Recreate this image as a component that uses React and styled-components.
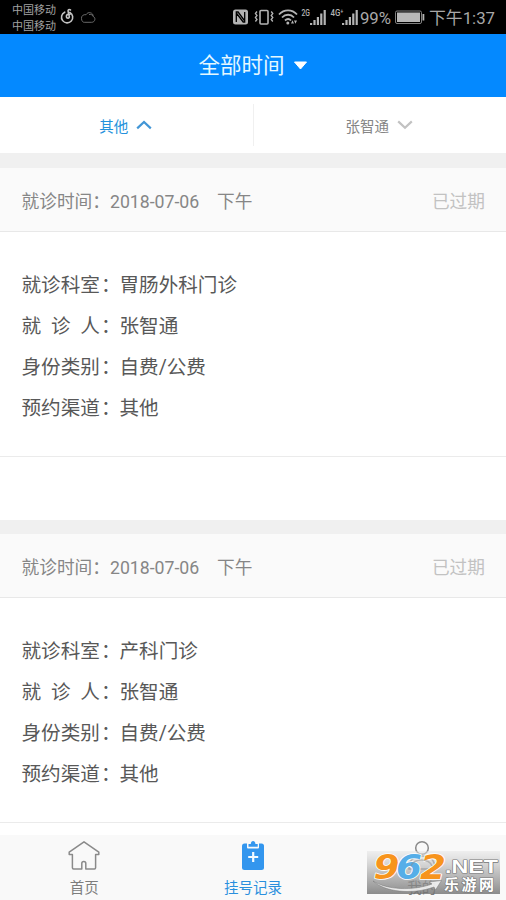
import React from 'react';
import styled, { createGlobalStyle } from 'styled-components';

const GlobalStyle = createGlobalStyle`
  * {
    box-sizing: border-box;
  }

  body {
    margin: 0;
    background: #fff;
    font-family: Roboto, 'Noto Sans CJK SC', sans-serif;
  }
`;

const Screen = styled.div`
  display: flex;
  flex-direction: column;
  width: 506px;
  height: 900px;
  overflow: hidden;
  background: #fff;
`;

const StatusBar = styled.div`
  display: flex;
  flex: none;
  align-items: center;
  height: 34px;
  padding: 0 11px 0 12px;
  background: #000;
  color: #b4b4b4;
`;

const Carriers = styled.div`
  width: 48px;
  padding-top: 3px;
  color: #a2a2a2;
  font-size: 11px;
  line-height: 15.5px;
  white-space: nowrap;
`;

const StatusIcons = styled.svg`
  display: block;
  flex: none;
`;

const Spacer = styled.div`
  flex: 1;
`;

const StatusText = styled.span`
  padding-top: 1px;
  color: #a8a8a8;
  font-size: ${({ $size }) => $size}px;
  line-height: 34px;
  white-space: nowrap;
`;

const Header = styled.div`
  display: flex;
  flex: none;
  justify-content: center;
  align-items: center;
  gap: 8px;
  height: 63px;
  background: #0489ff;
  color: #e4f8ff;
  font-size: 21.5px;
  line-height: 30px;
`;

const Filters = styled.div`
  display: flex;
  flex: none;
  align-items: center;
  height: 56px;
`;

const Filter = styled.div`
  display: flex;
  flex: 1;
  justify-content: center;
  align-items: center;
  gap: 8px;
  height: 42px;
  padding-right: 1px;
  color: ${({ $active }) => ($active ? '#2592dc' : '#858585')};
  font-size: 14.5px;

  & + & {
    border-left: 1px solid #f0f0f0;
  }
`;

const List = styled.div`
  flex: 1;
  overflow: hidden;
`;

const Card = styled.div`
  height: ${({ $first }) => ($first ? 367 : 366)}px;
  border-top: ${({ $first }) => ($first ? 15 : 14)}px solid #f0f0f0;
`;

const CardHeader = styled.div`
  display: flex;
  justify-content: space-between;
  align-items: center;
  height: 64px;
  padding: 0 21px 0 21.5px;
  border-bottom: 1px solid #e8e8e8;
  background: #fafafa;
  color: #868686;
  font-size: 17.7px;
  white-space: pre;
`;

const Expired = styled.span`
  color: #c2c2c2;
`;

const CardBody = styled.div`
  height: 225px;
  padding: 33px 21.5px 0;
  border-bottom: 1px solid #ebebeb;
`;

const Row = styled.div`
  display: flex;
  height: 40.85px;
  color: #585858;
  font-size: 19.6px;
  line-height: 41px;
`;

const Label = styled.div`
  display: flex;
  justify-content: space-between;
  width: 78.4px;
`;

const Colon = styled.span`
  width: 19.6px;
  padding-left: 1px;
`;

const TabBar = styled.div`
  position: relative;
  display: flex;
  flex: none;
  height: 65px;
  background: #f9f9f9;
`;

const Tab = styled.div`
  display: flex;
  flex: 1;
  flex-direction: column;
  align-items: center;
  padding-top: 4px;
  color: ${({ $active }) => ($active ? '#2a8fdd' : '#7d7d7d')};
  font-size: 14.5px;
  line-height: 22px;

  svg {
    display: block;
    margin-bottom: 5px;
  }
`;

const Watermark = styled.svg`
  position: absolute;
  right: 6px;
  bottom: 5px;
  overflow: visible;
`;

const records = [
  { date: '2018-07-06', period: '下午', department: '胃肠外科门诊' },
  { date: '2018-07-06', period: '下午', department: '产科门诊' },
];

function MusicCloudIcons() {
  return (
    <StatusIcons width="38" height="20" viewBox="0 0 38 20" fill="none">
      <path
        d="M4.700 5.200a5.600 5.600 0 1 0 5.200.2M10.500 3c-1.400-1-2.800-.3-2.400 1.300l1.200 5.400c.3 1.700-2.600 2-2.900.1-.3-2 1.700-3.200 3.600-2.600"
        stroke="#c4c4c4"
        strokeWidth="1.6"
        strokeLinecap="round"
      />
      <path
        d="M24.200 15.300h7.500c3.400 0 4.500-4.700 1.400-5.900.5-3.900-5.400-5.300-7-1.700-2.800-.5-5 1.300-4.600 4 .2 2.200 1.100 3.600 2.700 3.600zM29 7.700c1.300-.9 3-.4 4 1.600"
        stroke="#686868"
        strokeWidth="1"
      />
    </StatusIcons>
  );
}

function Bars({ x }) {
  return (
    <g fill="#b4b4b4">
      {[2, 5, 8, 11.5, 15].map((height, i) => (
        <rect key={height} x={x + i * 3.4} y={25 - height} width="2.2" height={height} />
      ))}
    </g>
  );
}

function SignalIcons() {
  return (
    <StatusIcons width="127" height="34" viewBox="232 0 127 34" fill="none">
      <rect x="232" y="9.5" width="15" height="15" rx="2.5" fill="#b4b4b4" />
      <path
        d="M235.300 22V12h1.800l6.300 8.500M243.700 12v10h-1.500l-6.500-8.500"
        stroke="#000"
        strokeWidth="1.300"
      />

      <rect x="259" y="10.5" width="8" height="13.5" rx="1" stroke="#b4b4b4" strokeWidth="1.6" />
      <path
        d="M256 11.500l-1.600 2 1.600 2-1.600 2 1.600 2-1.600 2M270.200 11.500l1.600 2-1.600 2 1.600 2-1.600 2 1.600 2"
        stroke="#b4b4b4"
        strokeWidth="1.3"
      />

      <path
        d="M278 14.500c5-5.500 13-5.500 18 0M281 17.500c3.500-3.700 8.700-3.700 12 0M284 20.500c2-2 4.200-2 6 0"
        stroke="#b4b4b4"
        strokeWidth="1.8"
      />
      <circle cx="286.8" cy="23" r="1.5" fill="#b4b4b4" />
      <path d="M290 23.500h3l-1.500-3.200zM293 20.500h3l-1.500 3.200z" fill="#b4b4b4" />

      <text
        x="300.5"
        y="16"
        fill="#b4b4b4"
        fontSize="9.5"
        fontWeight="500"
        textLength="8.5"
        lengthAdjust="spacingAndGlyphs"
      >
        2G
      </text>
      <Bars x={309} />
      <text
        x="329.5"
        y="16"
        fill="#b4b4b4"
        fontSize="9.5"
        fontWeight="500"
        textLength="13"
        lengthAdjust="spacingAndGlyphs"
      >
        4G⁺
      </text>
      <Bars x={341} />
    </StatusIcons>
  );
}

function BatteryIcon() {
  return (
    <StatusIcons width="38" height="16" viewBox="0 0 38 16" fill="none">
      <rect x="4.500" y="2" width="26" height="12.500" rx="1.500" stroke="#808080" />
      <rect x="6" y="3.500" width="23" height="9.500" fill="#b8b8b8" />
      <rect x="31.500" y="5" width="1.800" height="6.500" fill="#b4b4b4" />
    </StatusIcons>
  );
}

function Chevron({ up }) {
  return (
    <svg width="16" height="10" viewBox="0 0 16 10" fill="none">
      <path
        d={up ? 'M1.2 8.4L8 2l6.8 6.4' : 'M1.2 1.4L8 7.8l6.8-6.4'}
        stroke={up ? '#4296d6' : '#c2c2c2'}
        strokeWidth="2.2"
      />
    </svg>
  );
}

function Field({ label, value }) {
  return (
    <Row>
      <Label>
        {[...label].map((char) => (
          <span key={char}>{char}</span>
        ))}
      </Label>
      <Colon>：</Colon>
      <span>{value}</span>
    </Row>
  );
}

function Record({ record, first }) {
  return (
    <Card $first={first}>
      <CardHeader>
        <span>
          就诊时间：{record.date}
          {'\u3000'}
          {record.period}
        </span>
        <Expired>已过期</Expired>
      </CardHeader>
      <CardBody>
        <Field label="就诊科室" value={record.department} />
        <Field label="就诊人" value="张智通" />
        <Field label="身份类别" value="自费/公费" />
        <Field label="预约渠道" value="其他" />
      </CardBody>
    </Card>
  );
}

function SiteMark() {
  return (
    <Watermark width="133" height="44" viewBox="367 851 133 44">
      <defs>
        <linearGradient id="plate" x1="0" y1="0" x2="0" y2="1">
          <stop offset="0" stopColor="#e4e4e4" stopOpacity="0.5" />
          <stop offset="0.5" stopColor="#a8a8a8" stopOpacity="0.7" />
          <stop offset="1" stopColor="#707070" stopOpacity="0.8" />
        </linearGradient>
      </defs>
      <rect x="367" y="851" width="133" height="43" fill="url(#plate)" />
      <path
        d="M373 881c14 9 40 10 59 3l-3-2 12.500-1.500-6 9.500-1.500-3c-22 8-49 5-61-6z"
        fill="#f8f8f8"
        fillOpacity="0.85"
        stroke="#777"
        strokeWidth=".5"
      />
      <g
        fontFamily="'DejaVu Sans', sans-serif"
        fontWeight="700"
        fontStyle="italic"
        fontSize="33"
        stroke="#fff"
        strokeWidth="1.6"
        strokeLinejoin="round"
        paintOrder="stroke"
      >
        <text x="373.5" y="878.500" fill="#f7941d" textLength="26" lengthAdjust="spacingAndGlyphs">
          9
        </text>
        <text x="396" y="878.500" fill="#56aee8" textLength="26" lengthAdjust="spacingAndGlyphs">
          6
        </text>
        <text x="420" y="878.500" fill="#f7941d" textLength="26" lengthAdjust="spacingAndGlyphs">
          2
        </text>
      </g>
      <path
        d="M411 866c2-5 6-6 10.500-6s8.500 1 10.500 6"
        fill="none"
        stroke="#8a8a8a"
        strokeOpacity="0.5"
        strokeWidth="1.500"
      />
      <g fill="#fff" stroke="#777" strokeWidth="1.2" strokeLinejoin="round" paintOrder="stroke">
        <text
          x="445"
          y="872.5"
          fontFamily="'Liberation Sans', sans-serif"
          fontWeight="700"
          fontSize="18.5"
          textLength="53"
          lengthAdjust="spacingAndGlyphs"
        >
          .NET
        </text>
        <text
          x="444"
          y="889.5"
          fontFamily="'Noto Sans CJK SC', sans-serif"
          fontWeight="700"
          fontSize="15"
          textLength="50"
        >
          乐游网
        </text>
      </g>
    </Watermark>
  );
}

export default function App() {
  return (
    <Screen>
      <GlobalStyle />
      <StatusBar>
        <Carriers>
          中国移动
          <br />
          中国移动
        </Carriers>
        <MusicCloudIcons />
        <Spacer />
        <SignalIcons />
        <StatusText $size={16.8}>99%</StatusText>
        <BatteryIcon />
        <StatusText $size={16.8}>下午1:37</StatusText>
      </StatusBar>
      <Header>
        全部时间
        <svg width="15" height="10" viewBox="0 0 15 10">
          <path d="M1.500 1h12L7.500 8z" fill="#fff" stroke="#fff" strokeLinejoin="round" />
        </svg>
      </Header>
      <Filters>
        <Filter $active>
          其他
          <Chevron up />
        </Filter>
        <Filter>
          张智通
          <Chevron />
        </Filter>
      </Filters>
      <List>
        {records.map((record, i) => (
          <Record key={record.department} record={record} first={i === 0} />
        ))}
      </List>
      <TabBar>
        <Tab>
          <svg width="34" height="34" viewBox="0 0 34 34" fill="none">
            <path
              d="M17 2.800L2.200 13.200v2.200h3.200v13.400q0 1.200 1.200 1.200h8.200v-5.500q0-2 2-2t2 2V30h8.600q1.200 0 1.200-1.200V15.400h3.200v-2.200z"
              stroke="#8a8a8a"
              strokeWidth="1.500"
              strokeLinejoin="round"
            />
          </svg>
          首页
        </Tab>
        <Tab $active>
          <svg width="34" height="34" viewBox="0 0 34 34">
            <rect x="6" y="4.500" width="22" height="26.500" rx="2.500" fill="#3396ee" />
            <path d="M11 4v4.500q0 1 1 1h10q1 0 1-1V4z" fill="#f9f9f9" />
            <path d="M12.500 7.800V5h2.300c0-4 4.600-4 4.600 0h2.300v2.800z" fill="#3396ee" />
            <path d="M17.200 13v10M12.200 18h10" stroke="#f4fbff" strokeWidth="2.200" />
          </svg>
          挂号记录
        </Tab>
        <Tab>
          <svg width="34" height="34" viewBox="0 0 34 34" fill="none">
            <circle cx="17" cy="9" r="6.300" stroke="#8a8a8a" strokeWidth="1.500" />
            <path d="M4 30c0-9 5-13 13-13s13 4 13 13z" stroke="#8a8a8a" strokeWidth="1.500" />
          </svg>
          我的
        </Tab>
        <SiteMark />
      </TabBar>
    </Screen>
  );
}
